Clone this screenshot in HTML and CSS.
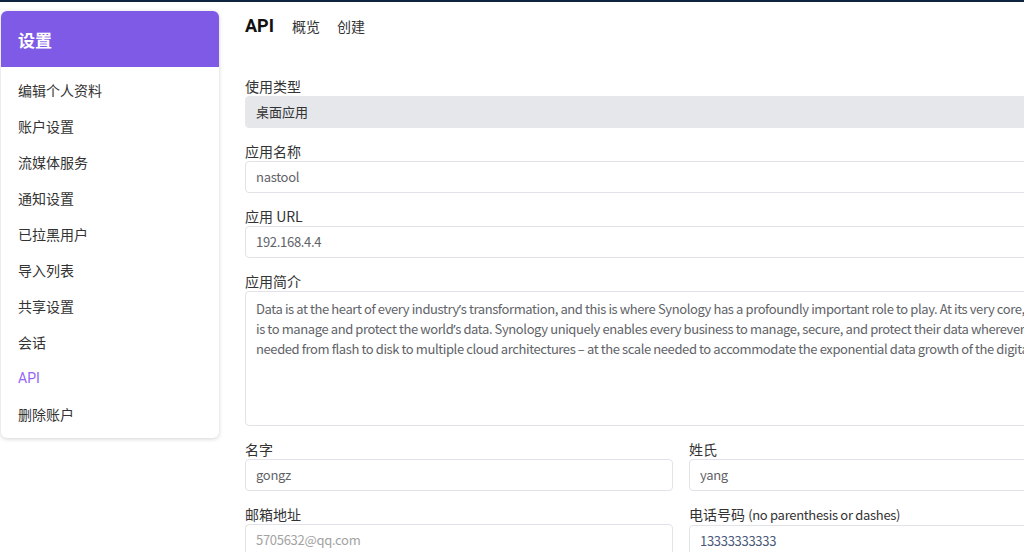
FILE: index.html
```html
<!DOCTYPE html>
<html lang="zh-CN">
<head>
<meta charset="utf-8">
<title>设置 - API</title>
<link rel="stylesheet" href="styles.css">
</head>
<body>
<div class="topbar"></div>
<div class="page">
  <aside class="sidebar">
    <div class="sidebar-head">设置</div>
    <ul class="menu">
      <li>编辑个人资料</li>
      <li>账户设置</li>
      <li>流媒体服务</li>
      <li>通知设置</li>
      <li>已拉黑用户</li>
      <li>导入列表</li>
      <li>共享设置</li>
      <li>会话</li>
      <li class="active">API</li>
      <li>删除账户</li>
    </ul>
  </aside>
  <main class="main">
    <div class="tabs">
      <span class="tab-title">API</span>
      <span class="tab">概览</span>
      <span class="tab">创建</span>
    </div>
    <form class="form">
      <div class="field">
        <label class="label">使用类型</label>
        <div class="input input-disabled">桌面应用</div>
      </div>
      <div class="field">
        <label class="label">应用名称</label>
        <div class="input latin">nastool</div>
      </div>
      <div class="field">
        <label class="label">应用 URL</label>
        <div class="input latin">192.168.4.4</div>
      </div>
      <div class="field">
        <label class="label">应用简介</label>
        <div class="input textarea latin" lang="en">Data is at the heart of every industry<span class="q">’</span>s transformation, and this is where Synology has a profoundly important role to play. At its very core, our mission
is to manage and protect the world<span class="q">’</span>s data. Synology uniquely enables every business to manage, secure, and protect their data wherever it lives and however it<span class="q">’</span>s
needed from flash to disk to multiple cloud architectures – at the scale needed to accommodate the exponential data growth of the digital era.</div>
      </div>
      <div class="row">
        <div class="field">
          <label class="label">名字</label>
          <div class="input latin">gongz</div>
        </div>
        <div class="field">
          <label class="label">姓氏</label>
          <div class="input latin">yang</div>
        </div>
      </div>
      <div class="row">
        <div class="field">
          <label class="label">邮箱地址</label>
          <div class="input latin placeholder">5705632@qq.com</div>
        </div>
        <div class="field">
          <label class="label">电话号码 <span class="hint">(no parenthesis or dashes)</span></label>
          <div class="input latin phone">13333333333</div>
        </div>
      </div>
    </form>
  </main>
</div>
</body>
</html>
```

FILE: styles.css
```css
html, body {
  margin: 0;
  padding: 0;
  background: #ffffff;
  overflow: hidden;
  height: 552px;
}
body {
  font-family: "Noto Sans CJK SC", "Noto Sans", sans-serif;
  color: #333333;
}
.topbar {
  height: 2px;
  background: #0e2440;
}
.page {
  display: flex;
  align-items: flex-start;
  padding: 9px 0 0 1px;
}
.sidebar {
  flex: 0 0 218px;
  width: 218px;
  background: #ffffff;
  border-radius: 6px;
  box-shadow: 0 1px 4px rgba(0, 0, 0, 0.18);
  overflow: hidden;
}
.sidebar-head {
  height: 56px;
  background: #7f5ae6;
  color: #ffffff;
  font-size: 17px;
  font-weight: 700;
  display: flex;
  align-items: center;
  padding-left: 17px;
}
.menu {
  list-style: none;
  margin: 0;
  padding: 5px 0 6px;
}
.menu li {
  height: 36px;
  line-height: 36px;
  padding-left: 17px;
  font-size: 14px;
  color: #333333;
}
.menu li.active {
  color: #9466f2;
  font-family: Roboto, "Noto Sans CJK SC", sans-serif;
}
.main {
  margin-left: 26px;
  flex: 0 0 1100px;
  width: 1100px;
}
.tabs {
  display: flex;
  align-items: baseline;
  height: 30px;
  padding-top: 4px;
}
.tab-title {
  font-family: Roboto, "Noto Sans CJK SC", sans-serif;
  font-weight: 700;
  font-size: 18px;
  color: #111111;
  margin-right: 18px;
}
.tab {
  font-size: 14px;
  color: #333333;
  margin-right: 17px;
}
.form {
  margin-top: 31px;
  display: flex;
  flex-direction: column;
  gap: 13px;
}
.row {
  display: grid;
  grid-template-columns: 428px 1fr;
  column-gap: 16px;
}
.field {
  display: flex;
  flex-direction: column;
}
.label {
  font-size: 14px;
  line-height: 20px;
  color: #333333;
}
.hint {
  font-size: 13px;
  letter-spacing: -0.3px;
}
.input {
  box-sizing: border-box;
  height: 32px;
  border: 1px solid #e2e3e8;
  border-radius: 4px;
  padding: 0 10px;
  font-size: 13px;
  line-height: 30px;
  color: #5f6368;
  background: #ffffff;
  white-space: nowrap;
  overflow: hidden;
}
.latin {
  letter-spacing: -0.3px;
}
.q {
  font-family: "Noto Sans", sans-serif;
}
.input-disabled {
  background: #e5e7eb;
  border-color: #e5e7eb;
  color: #333333;
}
.textarea {
  height: 135px;
  white-space: pre;
  line-height: 20px;
  padding: 7px 10px 6px;
  letter-spacing: -0.4px;
}
.placeholder {
  color: #a3a3a3;
}
.phone {
  color: #4a5878;
}
```
